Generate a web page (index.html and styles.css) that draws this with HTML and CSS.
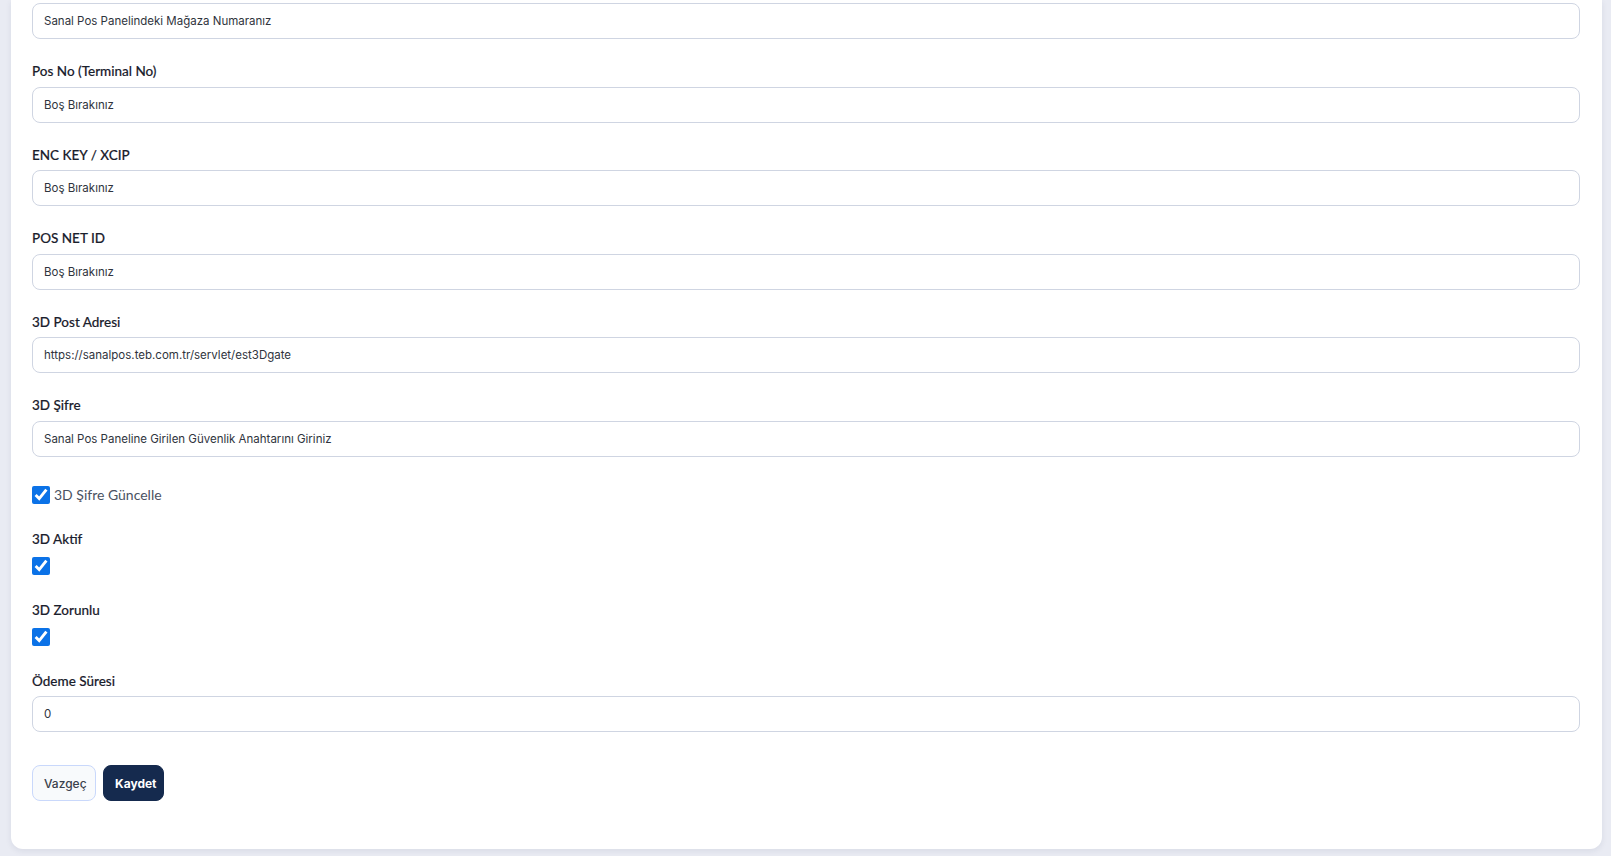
FILE: index.html
```html
<!DOCTYPE html>
<html lang="tr">
<head>
<meta charset="utf-8">
<title>Sanal Pos Ayarları</title>
<link rel="stylesheet" href="styles.css">
</head>
<body>
<div class="page">
  <form class="card">
    <div class="group first">
      <input class="field" type="text" placeholder="Sanal Pos Panelindeki Mağaza Numaranız">
    </div>
    <div class="group">
      <label class="label">Pos No (Terminal No)</label>
      <input class="field" type="text" placeholder="Boş Bırakınız">
    </div>
    <div class="group">
      <label class="label">ENC KEY / XCIP</label>
      <input class="field" type="text" placeholder="Boş Bırakınız">
    </div>
    <div class="group">
      <label class="label">POS NET ID</label>
      <input class="field" type="text" placeholder="Boş Bırakınız">
    </div>
    <div class="group">
      <label class="label">3D Post Adresi</label>
      <input class="field" type="text" value="https://sanalpos.teb.com.tr/servlet/est3Dgate">
    </div>
    <div class="group">
      <label class="label">3D Şifre</label>
      <input class="field" type="text" placeholder="Sanal Pos Paneline Girilen Güvenlik Anahtarını Giriniz">
    </div>
    <label class="check-row">
      <input class="check" type="checkbox" checked>
      <span class="check-text">3D Şifre Güncelle</span>
    </label>
    <div class="check-group">
      <label class="label">3D Aktif</label>
      <input class="check" type="checkbox" checked>
    </div>
    <div class="check-group">
      <label class="label">3D Zorunlu</label>
      <input class="check" type="checkbox" checked>
    </div>
    <div class="group">
      <label class="label">Ödeme Süresi</label>
      <input class="field" type="text" value="0">
    </div>
    <div class="actions">
      <button type="button" class="btn btn-light">Vazgeç</button>
      <button type="button" class="btn btn-dark">Kaydet</button>
    </div>
  </form>
</div>
</body>
</html>
```
FILE: styles.css
```css
* { box-sizing: border-box; }
html, body { margin: 0; padding: 0; }
body {
  background: #e9ebf3;
  font-family: Inter, "Noto Sans", sans-serif;
  color: #1f2633;
}
.page {
  padding: 0 9px 8px 11px;
}
.card {
  display: flex;
  flex-direction: column;
  background: #ffffff;
  border-radius: 0 0 12px 12px;
  box-shadow: 0 2px 6px rgba(30, 40, 80, 0.08);
  padding: 3px 22px 48px 21px;
}
.group {
  display: flex;
  flex-direction: column;
  margin-bottom: 23px;
}
.label {
  display: block;
  font-family: Lato, Inter, sans-serif;
  font-size: 13.5px;
  line-height: 19.5px;
  font-weight: 500;
  color: #1a202c;
  margin-bottom: 5px;
  -webkit-text-stroke: 0.15px #1a202c;
}
.field {
  width: 100%;
  height: 36px;
  border: 1px solid #cfd5e2;
  border-radius: 8px;
  padding: 0 11px;
  font-family: inherit;
  font-size: 11.5px;
  color: #2f343d;
  background: #fff;
  outline: none;
}
.field::placeholder { color: #2f343d; opacity: 1; }
.check-row {
  display: flex;
  align-items: center;
  gap: 4px;
  padding-top: 6px;
  margin-bottom: 26px;
}
.check {
  width: 18px;
  height: 18px;
  margin: 0;
  accent-color: #0b72e7;
}
.check-text {
  font-family: Lato, Inter, sans-serif;
  font-size: 14px;
  line-height: 18px;
  color: #4a5262;
}
.check-group {
  display: flex;
  flex-direction: column;
  align-items: flex-start;
  margin-bottom: 26px;
}
.check-group .label { margin-bottom: 7.5px; }
.actions {
  display: flex;
  gap: 7px;
  margin-top: 10px;
}
.btn {
  height: 36px;
  border-radius: 8px;
  font-family: inherit;
  font-size: 12px;
  padding: 0 11px;
  cursor: pointer;
}
.btn-light {
  background: #f8fafc;
  border: 1px solid #c9d8fb;
  color: #3a404b;
  font-weight: 500;
  width: 64px;
}
.btn-dark {
  background: #152a4e;
  border: 1px solid #152a4e;
  color: #ffffff;
  font-weight: 700;
  width: 61px;
}
```
